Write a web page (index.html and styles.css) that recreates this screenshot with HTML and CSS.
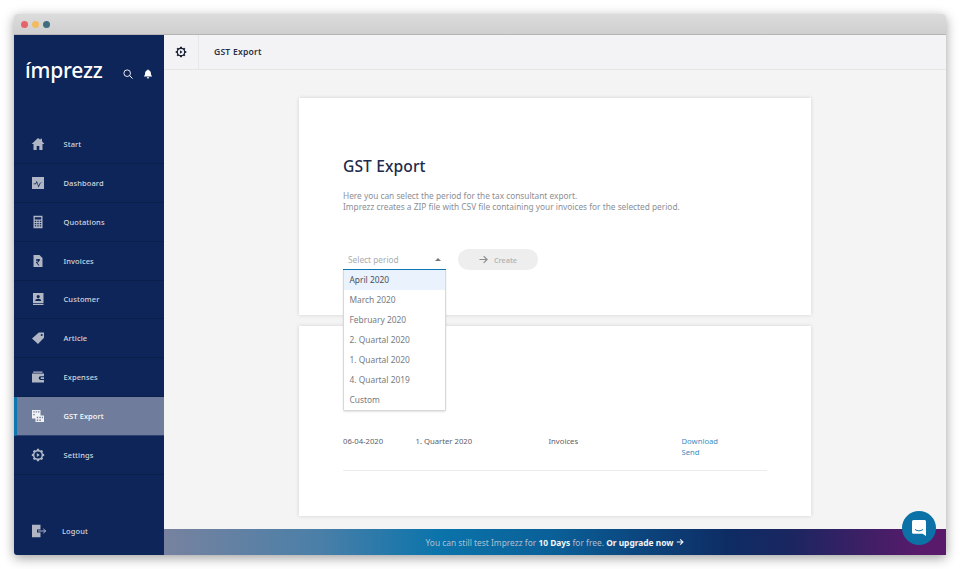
FILE: index.html
```html
<!DOCTYPE html>
<html lang="en">
<head>
<meta charset="utf-8">
<title>GST Export</title>
<link rel="stylesheet" href="styles.css">
</head>
<body>
<div class="window">
  <div class="titlebar">
    <span class="dot dot-red"></span><span class="dot dot-yellow"></span><span class="dot dot-teal"></span>
  </div>
  <div class="app">
    <aside class="sidebar">
      <div class="brand">
        <span class="logo">ímprezz</span>
        <svg class="brand-icon" viewBox="0 0 10 10"><circle cx="4.2" cy="4.2" r="3.3" fill="none" stroke="#fff" stroke-width=".9"/><path d="M6.600 6.600 9.500 9.500" stroke="#fff" stroke-width="1"/></svg>
        <svg class="brand-icon bell" viewBox="0 0 10 10"><path d="M5 .4c.5 0 .8.3.8.8 1.500.4 2.100 1.600 2.100 3.100 0 1.500.5 2.300 1.300 3.100H.8c.8-.8 1.300-1.600 1.300-3.100 0-1.500.6-2.700 2.100-3.100 0-.5.3-.8.8-.8zM3.800 8.200h2.400C6.100 9.100 5.600 9.600 5 9.600s-1.100-.5-1.200-1.400z" fill="#fff"/></svg>
      </div>
      <nav class="nav">
        <a class="nav-item"><svg class="nav-icon" viewBox="0 0 14 14"><path d="M7 1 .6 7h1.900v6h3.200V9h2.600v4h3.200V7h1.900L11 4.200V1.800H9.400v.9z"/></svg><span>Start</span></a>
        <a class="nav-item"><svg class="nav-icon" viewBox="0 0 14 14"><path fill-rule="evenodd" d="M1 1h12v12H1zM2.500 7.500h2l1.300-2.800 1.800 5 1.400-3h2.500V7H9.700L7.500 11.500 5.800 6.500 5 8.200H2.500z"/></svg><span>Dashboard</span></a>
        <a class="nav-item"><svg class="nav-icon" viewBox="0 0 14 14"><path fill-rule="evenodd" d="M2.500 .8h9v12.400h-9zM3.800 2.200v2.400h6.400V2.200zM3.800 5.800v1.300h1.400V5.800zm2.500 0v1.300h1.400V5.800zm2.500 0v1.300h1.400V5.800zM3.800 8v1.300h1.400V8zm2.500 0v1.300h1.400V8zm2.500 0v1.300h1.400V8zM3.800 10.200v1.300h1.400v-1.300zm2.500 0v1.300h1.400v-1.300zm2.500 0v1.300h1.400v-1.300z"/></svg><span>Quotations</span></a>
        <a class="nav-item"><svg class="nav-icon" viewBox="0 0 14 14"><path fill-rule="evenodd" d="M2.500 1h6l3 3v9h-9zM5 5v.8h1.300c.4 0 .7.200.8.500H5v.8h2.100c-.1.400-.5.600-1 .6H5v.8L7.400 11.500h1.100L6.300 8.800c.9-.1 1.500-.7 1.700-1.700h1v-.8H8c0-.2-.1-.4-.2-.5H9V5z"/></svg><span>Invoices</span></a>
        <a class="nav-item"><svg class="nav-icon" viewBox="0 0 14 14"><path fill-rule="evenodd" d="M2 1h10.500v10H2zM7.200 3a1.600 1.600 0 1 0 0 3.200 1.600 1.600 0 0 0 0-3.200zM4.200 9h6c0-1.500-1.300-2.300-3-2.300S4.200 7.500 4.200 9zM2 11.800h10.500V13H2z"/></svg><span>Customer</span></a>
        <a class="nav-item"><svg class="nav-icon" viewBox="0 0 14 14"><path fill-rule="evenodd" d="M7.800 1.500H13v5.200l-6 6.300L1 7.400zM10.700 3a1 1 0 1 0 0 2 1 1 0 0 0 0-2z"/></svg><span>Article</span></a>
        <a class="nav-item"><svg class="nav-icon" viewBox="0 0 14 14"><path fill-rule="evenodd" d="M2.200 1.500h9.300v1.200H2.200zM1 3.500h12v2.800H9.500a1.800 1.800 0 0 0 0 3.600H13v2.600H1zM9.700 7.300h3.300v1.600H9.700z"/></svg><span>Expenses</span></a>
        <a class="nav-item is-active"><svg class="nav-icon" viewBox="0 0 14 14"><path fill-rule="evenodd" d="M1 1h8.500v5.500H13V13H4.500V9.500H1zM2.300 2.200v1.300h1.400V2.200zm2.400 0v1.300h1.400V2.200zm2.300 0v1.300h1.400V2.200zM2.300 5v1.300h1.400V5zM5.800 7.800v1.500h1.400V7.800zm2.600 0v1.500h1.400V7.800zm2.500 0v1.500h1.100V7.800zM5.800 10.500V12h1.400v-1.500zm2.600 0V12h1.400v-1.500z"/></svg><span>GST Export</span></a>
        <a class="nav-item"><svg class="nav-icon" viewBox="0 0 14 14"><path fill-rule="evenodd" d="M6 .8h2l.3 1.300 1.200.5 1.200-.7 1.400 1.400-.7 1.200.5 1.200 1.300.3v2l-1.300.3-.5 1.200.7 1.200-1.400 1.400-1.200-.7-1.200.5-.3 1.300H6l-.3-1.300-1.200-.5-1.200.7-1.400-1.400.7-1.200-.5-1.200L.8 8V6l1.300-.3.500-1.200-.7-1.200 1.400-1.400 1.200.7 1.200-.5zM7 3.400a3.600 3.600 0 1 0 0 7.200 3.600 3.600 0 0 0 0-7.200zM5.800 5l3 2-3 2z"/></svg><span>Settings</span></a>
      </nav>
      <a class="logout"><svg class="logout-icon" viewBox="0 0 16 14"><path d="M1 .8h8.500v4.700H6v3h3.500v4.700H1z" fill="#b0b6c4"/><path d="M7 7h7.500M12.300 4.800 14.800 7l-2.500 2.200" fill="none" stroke="#b0b6c4" stroke-width="1"/></svg><span>Logout</span></a>
    </aside>
    <div class="main">
      <header class="topbar">
        <div class="topbar-icon"><svg viewBox="0 0 14 14"><path fill="#1a2238" fill-rule="evenodd" d="M6 .8h2l.3 1.300 1.200.5 1.200-.7 1.400 1.400-.7 1.200.5 1.200 1.300.3v2l-1.300.3-.5 1.200.7 1.200-1.400 1.400-1.200-.7-1.200.5-.3 1.300H6l-.3-1.300-1.200-.5-1.200.7-1.400-1.400.7-1.200-.5-1.200L.8 8V6l1.300-.3.500-1.200-.7-1.200 1.400-1.400 1.200.7 1.200-.5zM7 3.400a3.600 3.600 0 1 0 0 7.200 3.600 3.600 0 0 0 0-7.200zM5.800 5l3 2-3 2z"/></svg></div>
        <h2 class="topbar-title">GST Export</h2>
      </header>
      <div class="content">
        <section class="card card-create">
          <h1 class="card-title">GST Export</h1>
          <p class="card-text">Here you can select the period for the tax consultant export.<br>Imprezz creates a ZIP file with CSV file containing your invoices for the selected period.</p>
          <div class="form-row">
            <div class="select">
              <div class="select-control"><span>Select period</span><i class="caret"></i></div>
              <ul class="select-menu">
                <li class="is-hover">April 2020</li>
                <li>March 2020</li>
                <li>February 2020</li>
                <li>2. Quartal 2020</li>
                <li>1. Quartal 2020</li>
                <li>4. Quartal 2019</li>
                <li>Custom</li>
              </ul>
            </div>
            <button class="btn-create"><svg viewBox="0 0 10 10"><path d="M.5 5h8.500M5.200 1.200 9 5 5.200 8.800" fill="none" stroke="#8d8d8d" stroke-width="1.300"/></svg>Create</button>
          </div>
        </section>
        <section class="card card-list">
          <div class="row">
            <span>06-04-2020</span>
            <span>1. Quarter 2020</span>
            <span>Invoices</span>
            <span class="links"><a>Download</a><a>Send</a></span>
          </div>
        </section>
      </div>
      <footer class="trial">You can still test Imprezz for&nbsp;<b>10 Days</b>&nbsp;for free.&nbsp;<b>Or upgrade now</b><svg class="trial-arrow" viewBox="0 0 10 10"><path d="M1 5h7.500M5.200 1.600 8.700 5 5.200 8.400" fill="none" stroke="#f2f4f7" stroke-width="1.400"/></svg></footer>
    </div>
  </div>
  <div class="chat"><svg viewBox="0 0 16 18"><path d="M2.500 1h11A1.500 1.500 0 0 1 15 2.500V17l-3.500-2.300H2.500A1.500 1.500 0 0 1 1 13.200V2.500A1.500 1.500 0 0 1 2.500 1z" fill="#fff"/><path d="M4 10.500c2.500 1.800 5.500 1.800 8 0" fill="none" stroke="#0b71a6" stroke-width="1"/></svg></div>
</div>
</body>
</html>
```
FILE: styles.css
```css
* { box-sizing: border-box; }
html, body { margin: 0; height: 100%; background: #fff; }
body {
  padding: 14px 14px 14px;
  font-family: "Noto Sans", "Open Sans", sans-serif;
  overflow: hidden;
}
ul, h1, h2, p { margin: 0; padding: 0; }
.window {
  position: relative;
  height: 541px;
  display: flex;
  flex-direction: column;
  border-radius: 4px 4px 3px 3px;
  background: #f4f4f4;
  box-shadow: 0 3px 12px rgba(0, 0, 0, .38);
}
.titlebar {
  height: 21px;
  flex: none;
  display: flex;
  align-items: center;
  gap: 4px;
  padding-left: 7px;
  background: linear-gradient(#dcdcdc, #cfcfcf);
  border-bottom: 1px solid #b5b5b5;
  border-radius: 4px 4px 0 0;
}
.dot { width: 7px; height: 7px; border-radius: 50%; }
.dot-red { background: #e7636b; }
.dot-yellow { background: #f2bb5f; }
.dot-teal { background: #3f6d80; }
.app { flex: 1; display: flex; min-height: 0; }
.sidebar {
  width: 150px;
  flex: none;
  display: flex;
  flex-direction: column;
  background: #0d2559;
  color: #d2d6df;
  border-bottom-left-radius: 3px;
}
.brand {
  height: 90px;
  flex: none;
  display: flex;
  align-items: flex-start;
  padding: 20px 0 0 11px;
}
.logo {
  width: 98px;
  color: #fff;
  font: 500 21px/30px "Noto Sans", sans-serif;
  letter-spacing: -.2px;
}
.brand-icon { width: 10px; height: 10px; margin-top: 14px; }
.brand-icon.bell { margin-left: 10px; }
.nav { display: grid; grid-auto-rows: 38.875px; }
.nav-item {
  display: flex;
  align-items: center;
  padding-left: 17px;
  gap: 18.500px;
  font-size: 7.500px;
  font-weight: 500;
  letter-spacing: .1px;
  border-bottom: 1px solid #0b1f4b;
}
.nav-icon { width: 14px; height: 14px; fill: #b0b6c4; flex: none; }
.nav-item.is-active {
  background: #6f7c9b;
  color: #fff;
  border-left: 3px solid #0e76b0;
  padding-left: 14px;
  border-bottom-color: #2d4273;
}
.nav-item.is-active .nav-icon { fill: #f1f2f5; }
.logout {
  margin-top: auto;
  height: 48px;
  display: flex;
  align-items: center;
  gap: 15px;
  padding: 0 0 0 17px;
  font-size: 7.500px;
  font-weight: 500;
  letter-spacing: .1px;
}
.logout-icon { width: 16px; height: 14px; flex: none; }
.main { flex: 1; min-width: 0; display: flex; flex-direction: column; position: relative; }
.topbar {
  height: 35px;
  flex: none;
  display: flex;
  align-items: center;
  background: #f3f3f5;
  border-bottom: 1px solid #e6e6e6;
}
.topbar-icon {
  width: 35px;
  height: 100%;
  display: flex;
  align-items: center;
  justify-content: center;
  border-right: 1px solid #e8e8e8;
}
.topbar-icon svg { width: 12px; height: 12px; }
.topbar-title {
  margin-left: 15px;
  font-size: 8.600px;
  font-weight: 600;
  color: #2a3148;
  letter-spacing: .2px;
}
.content {
  flex: 1;
  display: flex;
  flex-direction: column;
  align-items: center;
  gap: 11px;
  padding-top: 28px;
  min-height: 0;
}
.card {
  width: 512px;
  background: #fff;
  padding: 0 44px;
  box-shadow: 0 0 4px rgba(0, 0, 0, .14);
}
.card-create { height: 217px; padding-top: 56px; }
.card-title { font-size: 15.600px; line-height: 24px; font-weight: 500; color: #1d2a4d; letter-spacing: .1px; }
.card-text { margin-top: 12px; font-size: 8.300px; line-height: 11px; color: #8b8f96; }
.form-row { display: flex; align-items: flex-start; gap: 12px; margin-top: 38px; }
.select { position: relative; width: 103px; }
.select-control {
  height: 20px;
  display: flex;
  align-items: center;
  justify-content: space-between;
  padding: 0 5px;
  font-size: 8.300px;
  color: #a9adb3;
  border-bottom: 1px solid #0e76b0;
}
.caret {
  width: 0; height: 0;
  margin-right: 0;
  border-left: 3px solid transparent;
  border-right: 3px solid transparent;
  border-bottom: 3px solid #777;
}
.select-menu {
  position: absolute;
  z-index: 2;
  top: 20px;
  left: 0;
  width: 103px;
  list-style: none;
  background: #fff;
  border: 1px solid #d6d8dc;
  border-top: 0;
  border-radius: 0 0 2px 2px;
  box-shadow: 0 1px 2px rgba(0, 0, 0, .12);
}
.select-menu li {
  height: 20px;
  line-height: 20px;
  padding-left: 5.500px;
  font-size: 8.400px;
  color: #777b82;
}
.select-menu li.is-hover { background: #e9f2fd; color: #4a4f5e; }
.btn-create {
  width: 80px;
  height: 21px;
  margin-top: -1px;
  display: flex;
  align-items: center;
  justify-content: center;
  gap: 6px;
  border: 0;
  border-radius: 11px;
  background: #eeeeee;
  font: 600 7.200px "Noto Sans", sans-serif;
  color: #b6b6b6;
}
.btn-create svg { width: 9px; height: 9px; }
.card-list { height: 190px; padding-top: 110px; }
.row {
  display: grid;
  grid-template-columns: 72.500px 133px 133px 1fr;
  height: 35px;
  font-size: 7.700px;
  line-height: 11px;
  color: #5c6068;
  border-bottom: 1px solid #ececec;
}
.links { display: flex; flex-direction: column; color: #3f8cc0; }
.trial {
  height: 26px;
  flex: none;
  display: flex;
  align-items: center;
  justify-content: center;
  font-size: 8.400px;
  color: #aebfd2;
  background: linear-gradient(90deg, #77829f 0%, #4a7fa8 20%, #0b74ab 35%, #0a5f97 50%, #0e2c64 72%, #1a2660 80%, #5a1a6b 97%);
}
.trial b { color: #f2f4f7; font-weight: 700; }
.trial-arrow { width: 8px; height: 8px; margin-left: 3px; }
.chat {
  position: absolute;
  right: 10px;
  bottom: 10px;
  width: 34px;
  height: 34px;
  display: flex;
  align-items: center;
  justify-content: center;
  border-radius: 50%;
  background: #0b71a6;
  z-index: 3;
}
.chat svg { width: 16px; height: 18px; }
```
